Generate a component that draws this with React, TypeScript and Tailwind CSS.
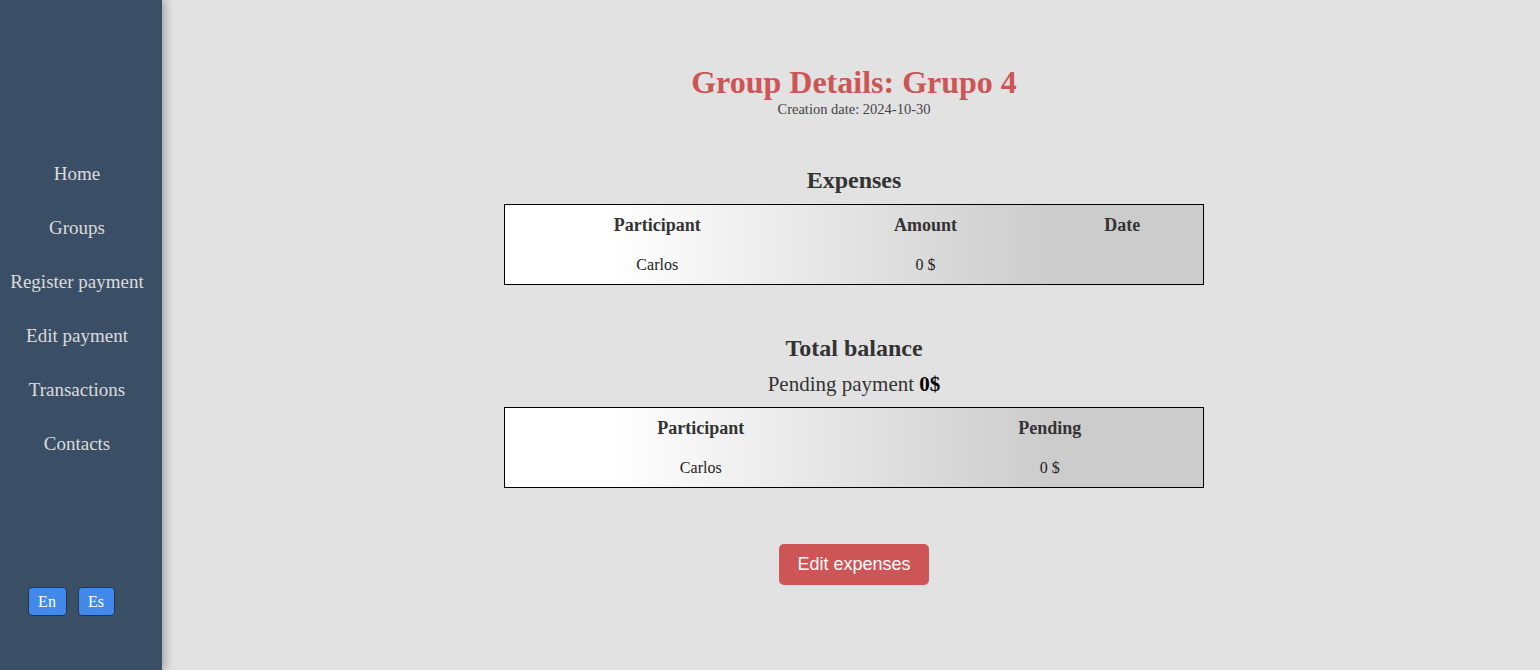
const navItems = [
  "Home",
  "Groups",
  "Register payment",
  "Edit payment",
  "Transactions",
  "Contacts",
];

function Sidebar(): JSX.Element {
  return (
    <aside className="relative z-10 flex h-[670px] w-[162px] shrink-0 flex-col items-center bg-[#3a4f66] pr-[8px] shadow-[4px_0_8px_rgba(0,0,0,0.25)]">
      <nav className="mt-[162px] flex flex-col items-center gap-[30px]">
        {navItems.map((item) => (
          <a
            key={item}
            href="#"
            className="text-[19px] leading-[24px] text-[#dcdcdc] whitespace-nowrap"
          >
            {item}
          </a>
        ))}
      </nav>
      <div className="mt-[131px] flex gap-[11px] pr-[12px]">
        <button className="h-[29px] w-[39px] rounded-[4px] border border-[#2b3440] bg-[#4289ee] text-[16px] text-white">
          En
        </button>
        <button className="h-[29px] w-[37px] rounded-[4px] border border-[#2b3440] bg-[#4289ee] text-[16px] text-white">
          Es
        </button>
      </div>
    </aside>
  );
}

function App(): JSX.Element {
  return (
    <div className="flex h-[670px] w-full overflow-hidden bg-[#e2e2e2] font-['Liberation_Serif',serif] text-[#333]">
      <Sidebar />
      <main className="flex flex-1 flex-col items-center pl-[6px] pt-[64px]">
        <h1 className="text-[32px] font-bold leading-[37px] text-[#cd5555]">
          Group Details: Grupo 4
        </h1>
        <p className="text-[14.5px] leading-[16px] text-[#444]">
          Creation date: 2024-10-30
        </p>

        <h2 className="mt-[49px] text-[24px] font-bold leading-[28px]">
          Expenses
        </h2>
        <table className="mt-[10px] w-[700px] border border-black bg-linear-to-r from-white from-15% to-[#cccccc] to-78% text-center">
          <thead>
            <tr className="h-[41px]">
              <th className="w-[305px] text-[18px]">Participant</th>
              <th className="w-[232px] text-[18px]">Amount</th>
              <th className="text-[18px]">Date</th>
            </tr>
          </thead>
          <tbody>
            <tr className="h-[39px]">
              <td className="text-[16px] text-[#222]">Carlos</td>
              <td className="text-[16px] text-[#222]">0 $</td>
              <td></td>
            </tr>
          </tbody>
        </table>

        <h2 className="mt-[49px] text-[24px] font-bold leading-[28px]">
          Total balance
        </h2>
        <p className="mt-[10px] text-[21px] leading-[24px]">
          Pending payment <b className="text-black">0$</b>
        </p>
        <table className="mt-[11px] w-[700px] border border-black bg-linear-to-r from-white from-15% to-[#cccccc] to-78% text-center">
          <thead>
            <tr className="h-[41px]">
              <th className="w-[392px] text-[18px]">Participant</th>
              <th className="text-[18px]">Pending</th>
            </tr>
          </thead>
          <tbody>
            <tr className="h-[39px]">
              <td className="text-[16px] text-[#222]">Carlos</td>
              <td className="text-[16px] text-[#222]">0 $</td>
            </tr>
          </tbody>
        </table>

        <button className="mt-[56px] h-[41px] w-[150px] rounded-[5px] bg-[#cd5555] font-['Liberation_Sans',sans-serif] text-[18px] text-white">
          Edit expenses
        </button>
      </main>
    </div>
  );
}

export default App;
